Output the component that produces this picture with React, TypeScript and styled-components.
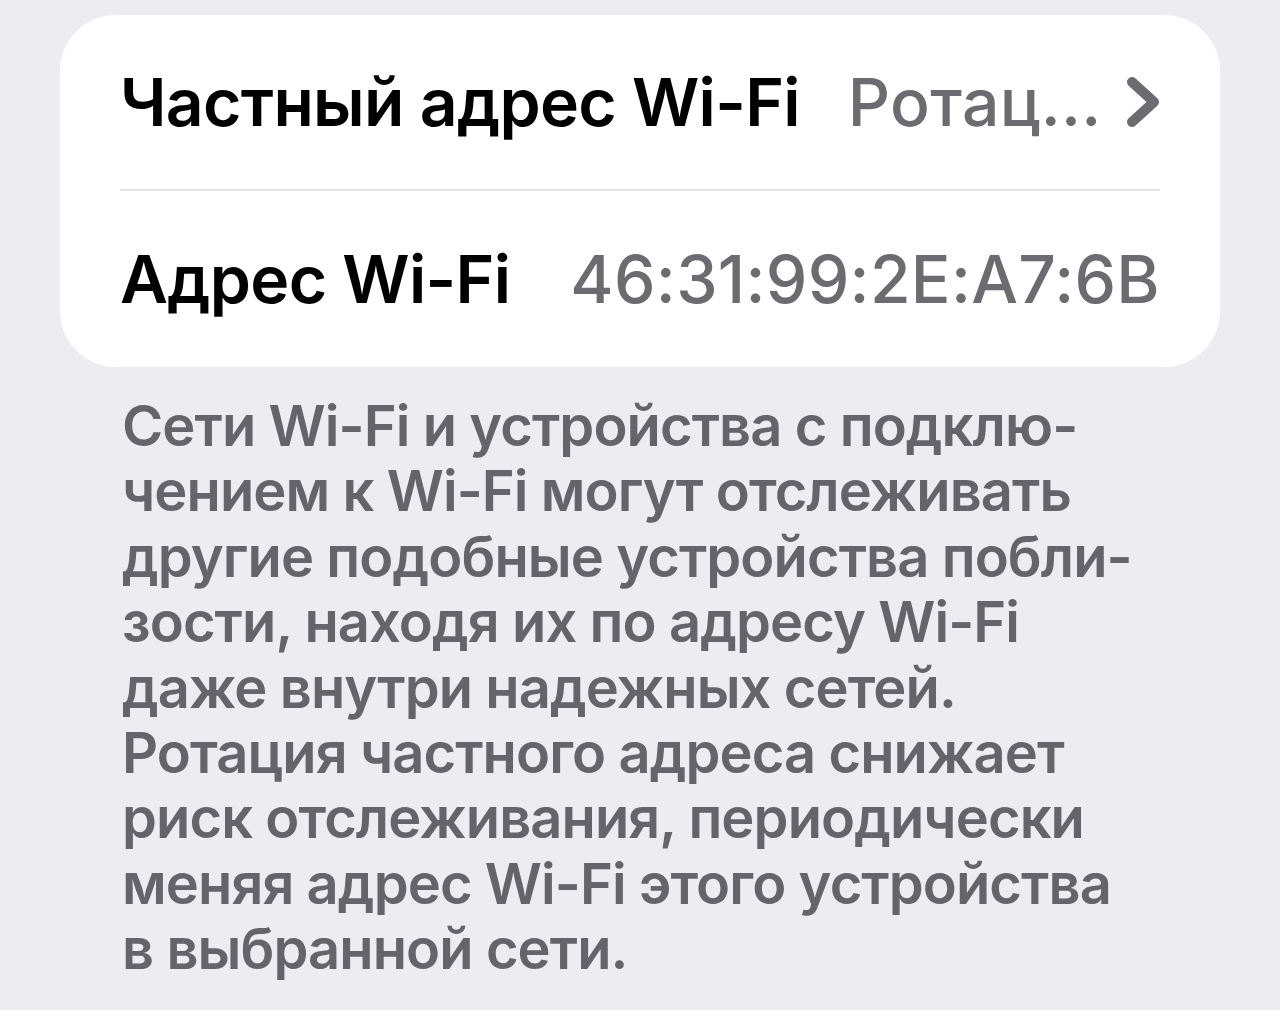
import styled, { createGlobalStyle } from "styled-components";

const GlobalStyle = createGlobalStyle`
  html, body {
    margin: 0;
    padding: 0;
    background: #edecf1;
  }
  body {
    font-family: Inter, "Noto Sans", "Liberation Sans", sans-serif;
    -webkit-font-smoothing: antialiased;
  }
`;

const Page = styled.div`
  width: 1280px;
  height: 1010px;
  box-sizing: border-box;
  padding: 15px 60px 0;
  overflow: hidden;
  background: #edecf1;
`;

const Card = styled.div`
  background: #ffffff;
  border-radius: 56px;
  padding: 0 60px;
  display: flex;
  flex-direction: column;
`;

const Row = styled.div<{ $divider?: boolean; $height: number }>`
  display: flex;
  align-items: center;
  gap: 48px;
  height: ${(p) => p.$height}px;
  border-bottom: ${(p) => (p.$divider ? "2px solid #e2e2e7" : "none")};
`;

const Title = styled.span`
  flex-shrink: 0;
  font-size: 66px;
  font-weight: 560;
  letter-spacing: -0.7px;
  color: #000000;
`;

const Value = styled.span`
  flex: 1;
  min-width: 0;
  text-align: right;
  white-space: nowrap;
  font-size: 66px;
  font-weight: 540;
  letter-spacing: 0.3px;
  color: #6c6b70;
`;

const Chevron = styled.svg`
  flex-shrink: 0;
  width: 34px;
  height: 52px;
  margin-left: -8px;
`;

const Footnote = styled.p`
  margin: 0;
  padding: 27px 0 0 62px;
  font-size: 56px;
  line-height: 65.4px;
  font-weight: 560;
  letter-spacing: -0.9px;
  color: #65646a;
`;

const footLines = [
  "Сети Wi-Fi и устройства с подклю-",
  "чением к Wi-Fi могут отслеживать",
  "другие подобные устройства побли-",
  "зости, находя их по адресу Wi-Fi",
  "даже внутри надежных сетей.",
  "Ротация частного адреса снижает",
  "риск отслеживания, периодически",
  "меняя адрес Wi-Fi этого устройства",
  "в выбранной сети.",
];

export default function App() {
  return (
    <>
      <GlobalStyle />
      <Page>
        <Card>
          <Row $divider $height={174}>
            <Title>Частный адрес Wi-Fi</Title>
            <Value>Ротац...</Value>
            <Chevron viewBox="0 0 34 52">
              <path
                d="M6 6 L28 26 L6 46"
                fill="none"
                stroke="#6c6b70"
                strokeWidth="10"
                strokeLinecap="round"
                strokeLinejoin="round"
              />
            </Chevron>
          </Row>
          <Row $height={176}>
            <Title>Адрес Wi-Fi</Title>
            <Value>46:31:99:2E:A7:6B</Value>
          </Row>
        </Card>
        <Footnote>
          {footLines.map((line, i) => (
            <span key={i}>
              {line}
              <br />
            </span>
          ))}
        </Footnote>
      </Page>
    </>
  );
}
